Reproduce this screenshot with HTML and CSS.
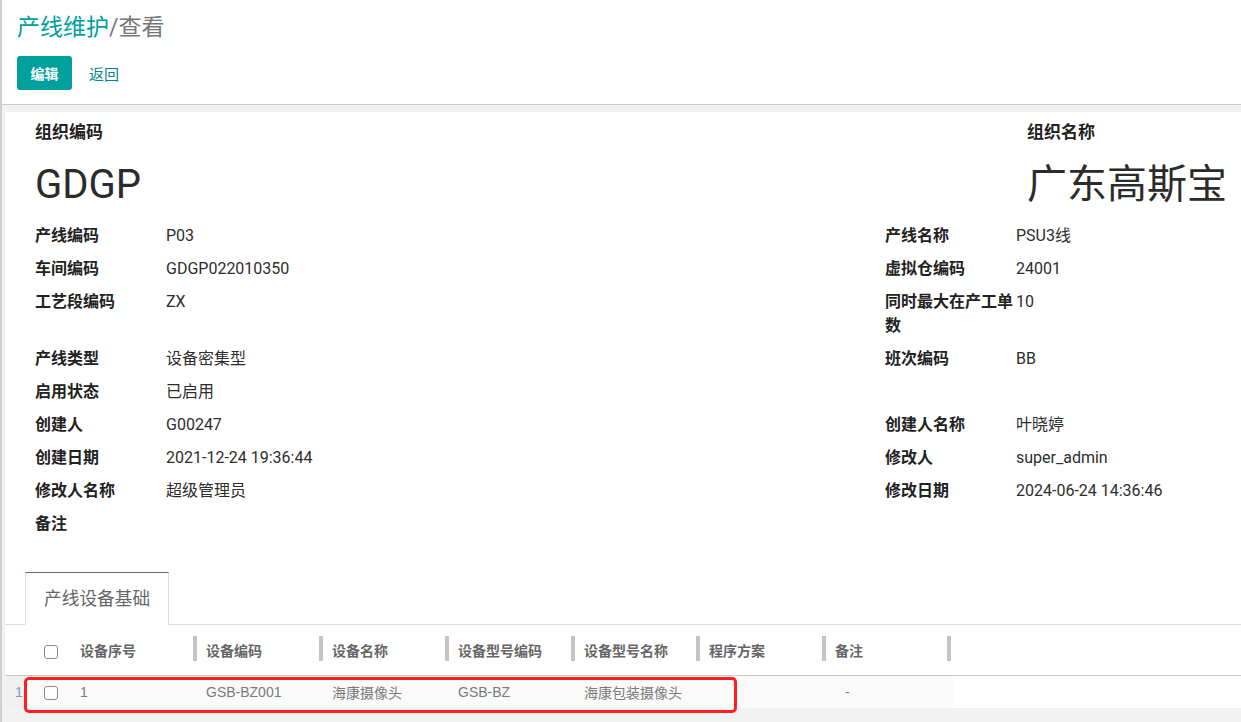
FILE: index.html
```html
<!DOCTYPE html>
<html lang="zh-CN">
<head>
<meta charset="utf-8">
<title>产线维护/查看</title>
<link rel="stylesheet" href="styles.css">
</head>
<body>
<div class="app">
  <header class="control-panel">
    <div class="breadcrumb"><span class="bc-link">产线维护</span><span class="bc-rest">/查看</span></div>
    <div class="actions">
      <button class="btn-primary" type="button">编辑</button>
      <button class="btn-link" type="button">返回</button>
    </div>
  </header>
  <main class="content">
    <div class="sheet">
      <div class="sheet-body">
        <div class="org-row">
          <div class="org-block">
            <div class="org-label">组织编码</div>
            <div class="org-value">GDGP</div>
          </div>
          <div class="org-block org-right">
            <div class="org-label">组织名称</div>
            <div class="org-value">广东高斯宝</div>
          </div>
        </div>
        <div class="fields">
          <div class="f-label">产线编码</div><div class="f-value">P03</div>
          <div class="f-label">产线名称</div><div class="f-value">PSU3线</div>

          <div class="f-label">车间编码</div><div class="f-value">GDGP022010350</div>
          <div class="f-label">虚拟仓编码</div><div class="f-value">24001</div>

          <div class="f-label">工艺段编码</div><div class="f-value">ZX</div>
          <div class="f-label">同时最大在产工单数</div><div class="f-value">10</div>

          <div class="f-label">产线类型</div><div class="f-value">设备密集型</div>
          <div class="f-label">班次编码</div><div class="f-value">BB</div>

          <div class="f-label">启用状态</div><div class="f-value">已启用</div>
          <div class="f-label"></div><div class="f-value"></div>

          <div class="f-label">创建人</div><div class="f-value">G00247</div>
          <div class="f-label">创建人名称</div><div class="f-value">叶晓婷</div>

          <div class="f-label">创建日期</div><div class="f-value">2021-12-24 19:36:44</div>
          <div class="f-label">修改人</div><div class="f-value">super_admin</div>

          <div class="f-label">修改人名称</div><div class="f-value">超级管理员</div>
          <div class="f-label">修改日期</div><div class="f-value">2024-06-24 14:36:46</div>

          <div class="f-label">备注</div><div class="f-value"></div>
        </div>
      </div>

      <div class="notebook">
        <div class="tabs">
          <div class="tab active">产线设备基础</div>
        </div>
        <div class="table-wrap">
          <table class="grid">
            <colgroup>
              <col class="c-num"><col class="c-check"><col class="c-125"><col class="c-126"><col class="c-126"><col class="c-126"><col class="c-125"><col class="c-126"><col class="c-125"><col class="c-end">
            </colgroup>
            <thead>
              <tr>
                <th class="th-num"></th>
                <th class="th-check"><span class="checkbox"></span></th>
                <th class="th-first">设备序号</th>
                <th class="th-sep">设备编码</th>
                <th class="th-sep">设备名称</th>
                <th class="th-sep">设备型号编码</th>
                <th class="th-sep">设备型号名称</th>
                <th class="th-sep">程序方案</th>
                <th class="th-sep">备注</th>
                <th class="th-sep"></th>
              </tr>
            </thead>
            <tbody>
              <tr>
                <td class="td-num">1</td>
                <td class="td-check"><span class="checkbox"></span></td>
                <td class="td-first">1</td>
                <td>GSB-BZ001</td>
                <td>海康摄像头</td>
                <td>GSB-BZ</td>
                <td>海康包装摄像头</td>
                <td></td>
                <td class="td-dash">-</td>
                <td class="td-end"></td>
              </tr>
            </tbody>
          </table>
          <div class="highlight"></div>
        </div>
      </div>
    </div>
  </main>
</div>
</body>
</html>
```
FILE: styles.css
```css
* { box-sizing: border-box; }

html, body {
  margin: 0;
  padding: 0;
  height: 100%;
  overflow: hidden;
  background: #ffffff;
  font-family: "Roboto", "Noto Sans CJK SC", sans-serif;
  color: #212529;
}

.app {
  min-height: 100%;
  border-left: 2px solid #cfcfcf;
  background: #f2f2f2;
}

/* ---------- control panel ---------- */
.control-panel {
  background: #ffffff;
  padding: 13px 0 14px 15px;
  border-bottom: 1px solid #c9c9c9;
}

.breadcrumb {
  height: 30px;
  line-height: 30px;
  font-size: 23px;
}

.bc-link { color: #00a09d; }
.bc-rest { color: #777777; }

.actions {
  margin-top: 13px;
  display: flex;
  align-items: center;
}

.btn-primary {
  height: 34px;
  width: 55px;
  border: none;
  border-radius: 3px;
  background: #00a09d;
  color: #ffffff;
  font-family: "Roboto", "Noto Sans CJK SC", sans-serif;
  font-size: 14px;
  font-weight: 600;
  padding: 0;
}

.btn-link {
  margin-left: 10px;
  height: 34px;
  border: none;
  background: transparent;
  color: #00878a;
  font-family: "Roboto", "Noto Sans CJK SC", sans-serif;
  font-size: 15px;
  padding: 0 7px;
}

/* ---------- sheet ---------- */
.content {
  padding: 7px 0 0 3px;
}

.sheet {
  background: #ffffff;
}

.sheet-body {
  padding: 8px 0 0 30px;
}

.org-row {
  display: flex;
  justify-content: space-between;
}

.org-right {
  width: 214px;
}

.org-label {
  font-size: 17px;
  font-weight: 700;
  line-height: 24px;
  color: #222222;
}

.org-value {
  margin-top: 16px;
  font-size: 40px;
  line-height: 50px;
  color: #2b2b2b;
}

.fields {
  margin-top: 14px;
  display: grid;
  grid-template-columns: 131px 1fr 131px 225px;
  row-gap: 9px;
  font-size: 16px;
  line-height: 24px;
}

.f-label {
  font-weight: 700;
  color: #222222;
}

.f-value {
  color: #2d2d2d;
}

/* ---------- notebook ---------- */
.notebook {
  margin-top: 36px;
}

.tabs {
  display: flex;
  padding-left: 20px;
  border-bottom: 1px solid #dcdcdc;
}

.tab {
  margin-bottom: -1px;
  padding: 14px 18px 13px;
  font-size: 17.7px;
  line-height: 24px;
  color: #666666;
  background: #ffffff;
  border: 1px solid #dcdcdc;
  border-top: 1px solid #875a7b;
  border-bottom-color: #ffffff;
}

.table-wrap {
  position: relative;
  background: linear-gradient(to bottom, transparent 50px, #c8c8c8 50px, #c8c8c8 51px, transparent 51px);
}

.grid {
  width: 948px;
  table-layout: fixed;
  border-collapse: collapse;
  font-family: "Liberation Sans", "Noto Sans CJK SC", sans-serif;
  font-size: 14px;
}

.c-num { width: 20px; }
.c-check { width: 43px; }
.c-125 { width: 125px; }
.c-126 { width: 126px; }
.c-end { width: 6px; }

.grid thead tr {
  height: 51px;
}

.grid th {
  position: relative;
  text-align: left;
  font-weight: 700;
  color: #666666;
  padding: 0 0 1px 13px;
  white-space: nowrap;
  overflow: hidden;
}

.grid th.th-num { padding: 0; }
.grid th.th-check { padding: 3px 0 0 19px; }
.grid th.th-first { padding-left: 12px; }

.th-sep::before {
  content: "";
  position: absolute;
  left: 0;
  top: 11px;
  width: 4px;
  height: 25px;
  background: #c4c4c4;
}

.checkbox {
  display: block;
  width: 14px;
  height: 14px;
  border: 1px solid #8a8a8a;
  border-radius: 3px;
  background: #ffffff;
}

.grid tbody tr {
  height: 32px;
}

.grid td {
  color: #7a7a7a;
  padding: 0 0 0 13px;
  background: #fafafa;
  white-space: nowrap;
  overflow: hidden;
}

.grid td.td-num {
  padding: 0 0 0 10px;
  background: #f0f0f0;
  color: #7d9ac4;
}

.grid td.td-check { padding: 1px 0 0 19px; }
.grid td.td-first { padding-left: 12px; }
.grid td.td-dash { padding-left: 23px; }
.grid td.td-end { padding: 0; }

.highlight {
  position: absolute;
  left: 19px;
  top: 52px;
  width: 713px;
  height: 36px;
  border: 3px solid #ff1e1e;
  border-radius: 5px;
  pointer-events: none;
}
```
